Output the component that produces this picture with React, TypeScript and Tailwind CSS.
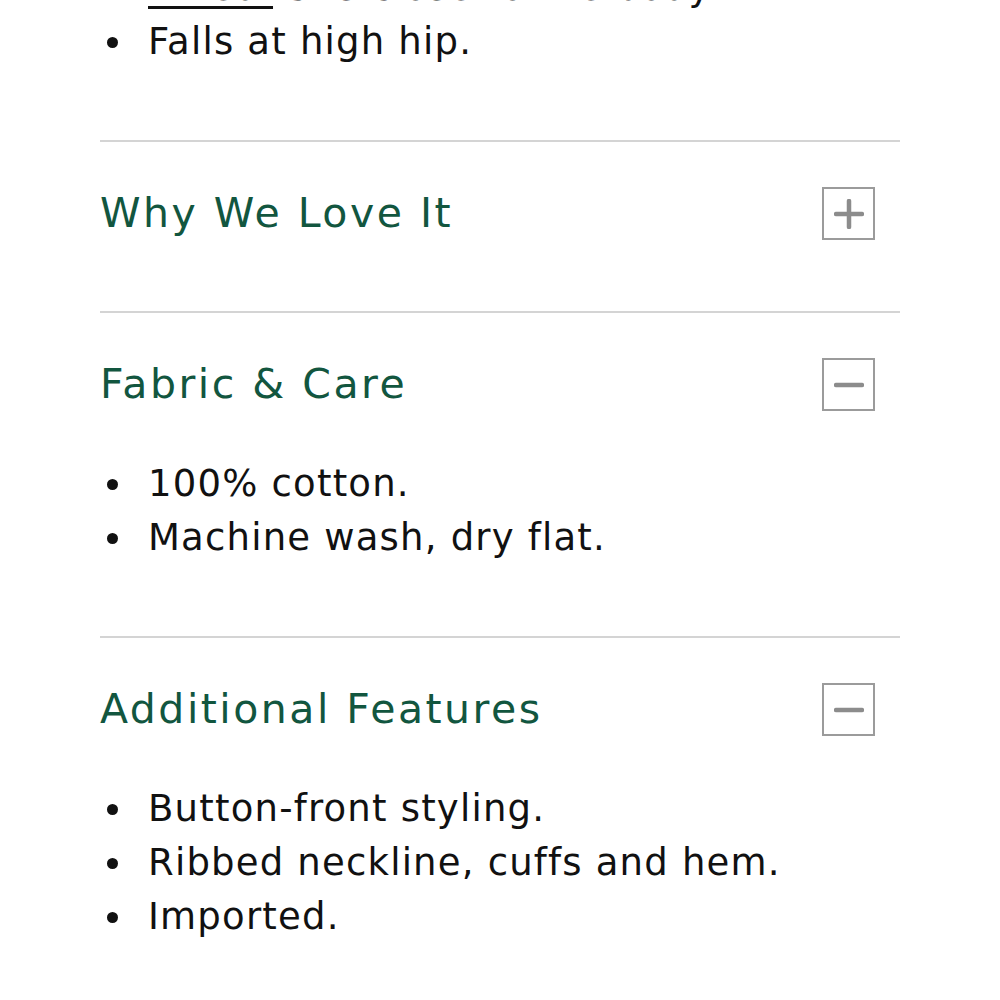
const sections = [
  { title: 'Why We Love It', open: false, items: [] as string[] },
  { title: 'Fabric & Care', open: true, items: ['100% cotton.', 'Machine wash, dry flat.'] },
  {
    title: 'Additional Features',
    open: true,
    items: ['Button-front styling.', 'Ribbed neckline, cuffs and hem.', 'Imported.'],
  },
];

function BulletList({ items }: { items: string[] }) {
  return (
    <ul className="flex flex-col">
      {items.map((item) => (
        <li key={item} className="flex h-[54px] items-center text-[37px] tracking-[1.2px] text-[#111]">
          <span className="ml-[7px] mr-[30px] h-[11px] w-[11px] shrink-0 rounded-full bg-[#111]" />
          <span>{item}</span>
        </li>
      ))}
    </ul>
  );
}

function ToggleIcon({ open }: { open: boolean }) {
  return (
    <div className="mr-[25px] flex h-[53px] w-[53px] items-center justify-center border-2 border-[#9b9b9b]">
      <svg width="30" height="30" viewBox="0 0 30 30">
        <line x1="2" y1="15" x2="28" y2="15" stroke="#8c8c8c" strokeWidth="4.5" strokeLinecap="round" />
        {!open && <line x1="15" y1="2" x2="15" y2="28" stroke="#8c8c8c" strokeWidth="4.5" strokeLinecap="round" />}
      </svg>
    </div>
  );
}

export default function App() {
  return (
    <div
      className="h-[1000px] w-[1000px] overflow-hidden bg-white"
      style={{ fontFamily: '"DejaVu Sans", sans-serif' }}
    >
      <div className="mx-auto -mt-[39px] w-[800px]">
        <div className="pb-[71px]">
          <ul className="flex flex-col">
            <li className="flex h-[54px] items-center text-[37px] tracking-[1.2px] text-[#111]">
              <span className="ml-[7px] mr-[30px] h-[11px] w-[11px] shrink-0 rounded-full bg-[#111]" />
              <span>
                <span className="underline underline-offset-[6px]">Fitted:</span> Sits close to the body.
              </span>
            </li>
            <li className="flex h-[54px] items-center text-[37px] tracking-[1.2px] text-[#111]">
              <span className="ml-[7px] mr-[30px] h-[11px] w-[11px] shrink-0 rounded-full bg-[#111]" />
              <span>Falls at high hip.</span>
            </li>
          </ul>
        </div>

        {sections.map((s) => (
          <section key={s.title} className="border-t-2 border-[#d4d4d4] pb-[71px]">
            <div className="flex items-center justify-between pt-[45px]">
              <h2 className="text-[41px] leading-none tracking-[2.5px] text-[#12563f]">{s.title}</h2>
              <ToggleIcon open={s.open} />
            </div>
            {s.open && (
              <div className="mt-[46px]">
                <BulletList items={s.items} />
              </div>
            )}
          </section>
        ))}
      </div>
    </div>
  );
}
